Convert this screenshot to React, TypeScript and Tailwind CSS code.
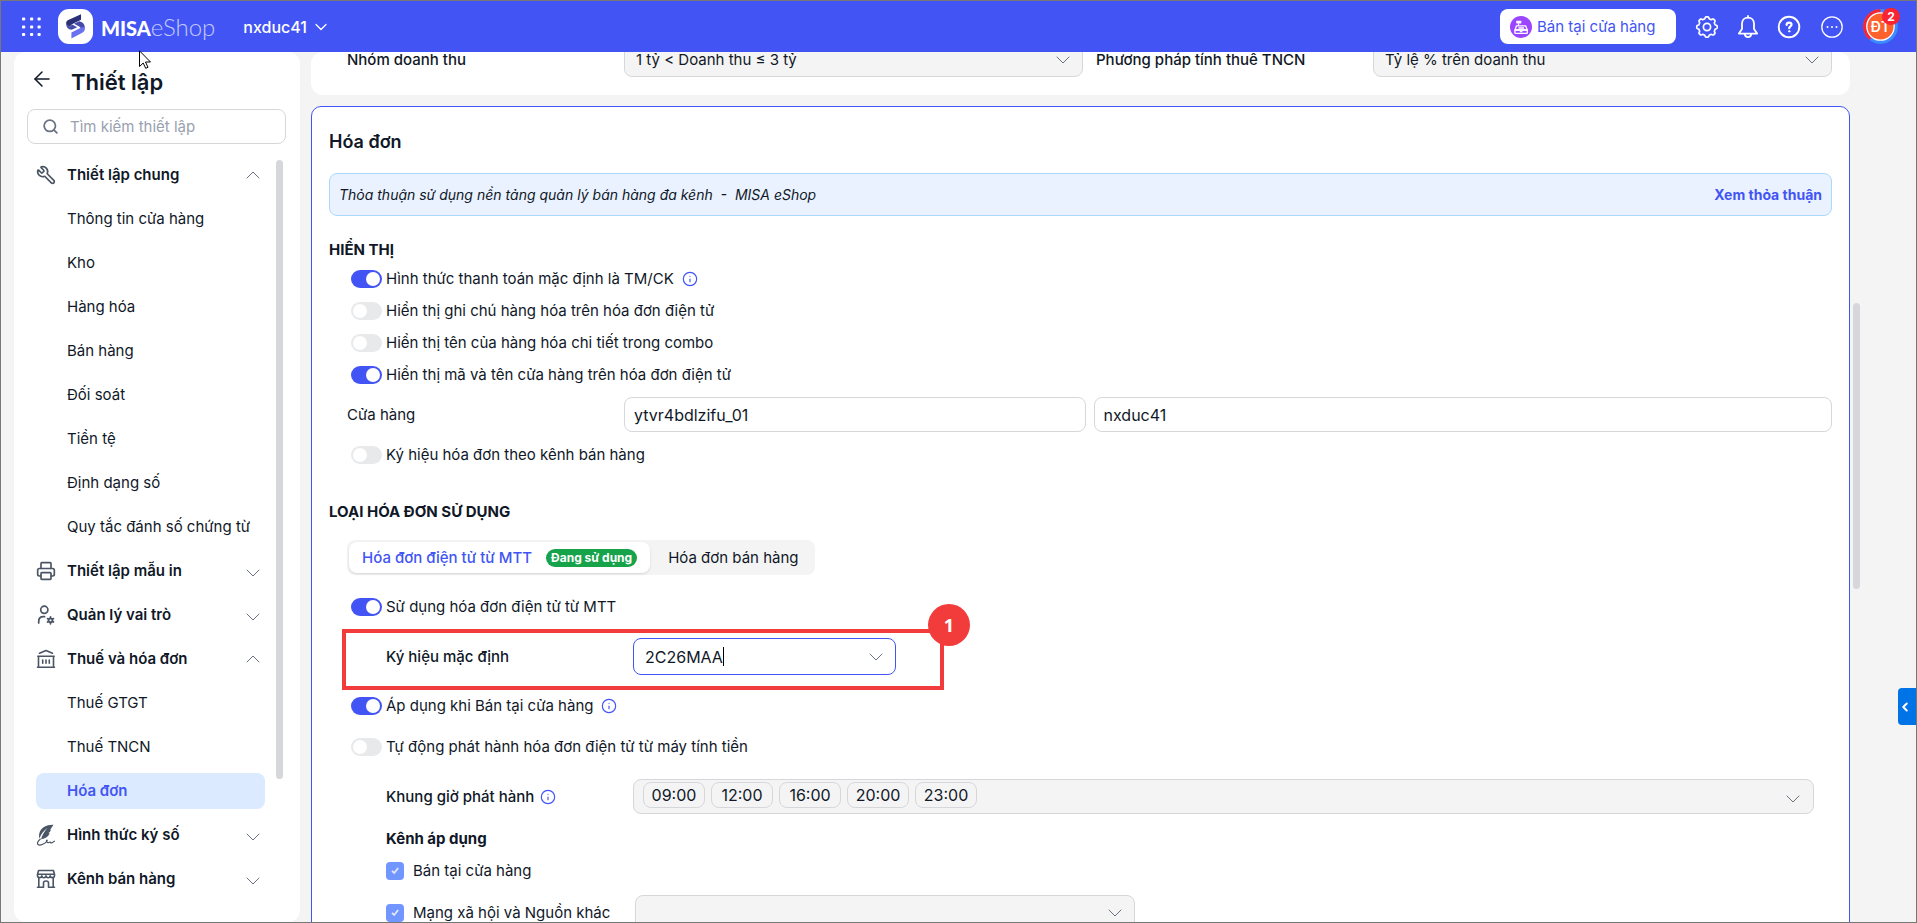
import type { ReactNode } from "react";
import { ArrowLeft, ChevronDown, ChevronLeft, ChevronUp, Info, Printer, Search, Wrench } from "lucide-react";

type NavGroup = {
  label: string;
  icon: ReactNode;
  open?: boolean;
  items?: string[];
};

/* ---------- Icons ---------- */

// 8-tooth gear outline, built from a radius that swings between tooth and gap
const gearPath =
  Array.from({ length: 160 }, (_, i) => {
    const a = (i / 160) * Math.PI * 2;
    const r = 9.3 + 0.95 * Math.tanh(2.2 * Math.cos(8 * a));
    return `${i === 0 ? "M" : "L"}${(12 + r * Math.sin(a)).toFixed(2)} ${(12 - r * Math.cos(a)).toFixed(2)}`;
  }).join("") + "Z";

function GearIcon() {
  return (
    <svg viewBox="0 0 24 24" className="w-6 h-6" fill="none" stroke="currentColor" strokeWidth="1.7">
      <path d={gearPath} strokeLinejoin="round" />
      <circle cx="12" cy="12" r="3.6" />
    </svg>
  );
}

function BellIcon() {
  return (
    <svg viewBox="0 0 24 24" className="w-6 h-6" fill="none" stroke="currentColor" strokeWidth="1.8" strokeLinejoin="round">
      <path d="M12 2.6c-3.6 0-6 2.7-6 6.2v5.2L2.9 18.6h18.2L18 14V8.8c0-3.5-2.4-6.2-6-6.2Z" />
      <path d="M8.7 18.8c.2 2 1.5 3.3 3.3 3.3s3.1-1.3 3.3-3.3" />
      <path d="M12 1v1.6" strokeLinecap="round" />
    </svg>
  );
}

function HelpIcon() {
  return (
    <svg viewBox="0 0 24 24" className="w-6 h-6" fill="none" stroke="currentColor" strokeLinecap="round" strokeLinejoin="round">
      <circle cx="12" cy="12" r="10.3" strokeWidth="1.9" />
      <path d="M9.6 9.8c.1-1.3 1.1-2.1 2.5-2.1s2.4.8 2.4 2c0 1.7-2.3 1.7-2.3 3.5" strokeWidth="2.2" />
      <circle cx="12.2" cy="16.3" r=".7" fill="currentColor" strokeWidth="1" />
    </svg>
  );
}

function MoreIcon() {
  return (
    <svg viewBox="0 0 24 24" className="w-6 h-6" fill="none" stroke="currentColor">
      <circle cx="12" cy="12" r="10.2" strokeWidth="1.3" />
      <g fill="currentColor" stroke="none">
        <circle cx="7.5" cy="12" r="1" />
        <circle cx="12" cy="12" r="1" />
        <circle cx="16.5" cy="12" r="1" />
      </g>
    </svg>
  );
}

function AppsIcon() {
  return (
    <svg viewBox="0 0 20 20" className="w-5 h-5" fill="currentColor">
      {[0, 8, 15.5].map((y) =>
        [0, 8, 15.5].map((x) => <rect key={`${x}-${y}`} x={x} y={y + 0.5} width="3.2" height="3" rx="1" />)
      )}
    </svg>
  );
}

function LogoMark() {
  return (
    <svg viewBox="0 0 35 35" className="w-[35px] h-[35px] rounded-[11px] bg-white">
      <path d="M23 5.2v5.6l-9 4.4-2.5 2.6L8.3 15.2c-.6-2 .2-3.600 2-4.300Z" fill="#2b2f78" />
      <path d="M8 14.800l3.600 3 2.600-2.300 5 2.800-5.500 2.500c-3.700-.3-5.500-2.500-5.700-6Z" fill="#4549a8" />
      <path d="M16 14.800l5.200-2.600c3.500.7 5.400 2.700 5.600 5.700l-2 2.800-3.600-3.200Z" fill="#4549a8" />
      <path d="M27 17.500c.3 3.500-.8 5.400-3.200 6.600L13.400 29.600v-6.100l9-4.400Z" fill="#6a72ef" />
    </svg>
  );
}

function RegisterIcon() {
  return (
    <svg viewBox="0 0 22 22" className="w-[22px] h-[22px]" fill="none" stroke="white" strokeWidth="1.3" strokeLinejoin="round">
      <circle cx="11" cy="11" r="11" fill="#9a45ff" stroke="none" />
      <path d="M6.5 9.8h9.2l1.5 4.2H5Z" />
      <rect x="4.9" y="14" width="12.4" height="3.3" rx=".6" />
      <path d="M8.500 9.500V7.500M8.500 12h5.500M9.800 15.700h2.600" />
      <rect x="6.3" y="4.8" width="5" height="2.6" rx=".4" fill="white" stroke="none" />
    </svg>
  );
}

function UserCogIcon() {
  return (
    <svg viewBox="0 0 20 20" className="w-5 h-5" fill="none" stroke="currentColor" strokeWidth="1.7" strokeLinecap="round">
      <circle cx="8.3" cy="4.8" r="3.6" />
      <path d="M2.700 18v-1.600c0-2.800 1.800-4.700 4.700-4.700h1.200" />
      <circle cx="14.5" cy="15.3" r="2" />
      <path d="M14.500 11.800v1.500M14.500 17.300v1.500M11.500 13.600l1.300.7M16.200 16.300l1.300.7M11.500 17l1.300-.7M16.200 14.300l1.300-.7" />
    </svg>
  );
}

function BankIcon() {
  return (
    <svg viewBox="0 0 20 20" className="w-5 h-5" fill="none" stroke="currentColor" strokeWidth="1.6" strokeLinecap="round" strokeLinejoin="round">
      <path d="M3.500 4.200 10 1.500l6.500 2.700M1.800 7.200h16.400M1.500 18.300h17M2.500 7.200v11M17.500 7.200v11" />
      <path d="M6.700 11v3.200M10 11v3.200M13.300 11v3.200" />
    </svg>
  );
}

function QuillIcon() {
  return (
    <svg viewBox="0 0 20 22" className="w-5 h-[22px]" fill="none" stroke="currentColor" strokeLinecap="round">
      <path d="M17.500.8C10.500.6 4.500 4 3.300 9.500c-.4 1.700-.3 3.400.1 4.900C5.400 9.500 8 6.500 11.500 4 8.500 7.200 6.200 11 5 15.300c4.500-.4 7.600-2.500 8.700-6.200l-1.500.2c1.500-.9 2.300-1.900 2.700-3.500l-.9.1c1.300-1.300 2.100-3.100 3.500-5.100Z" fill="currentColor" stroke="none" />
      <path d="M4.200 15.200C2 16.800.8 19 2 20.500c2 1.700 7.500-1.200 9-3.500.8-1.300-.7-1.200-.5.2.3 1.700 2 1.900 3.200.9.7-.7.6 1.200 2 .8 1-.2 1.600-1 2.600-1.700" strokeWidth="1.2" />
    </svg>
  );
}

function StoreIcon() {
  return (
    <svg viewBox="0 0 20 20" className="w-5 h-5" fill="none" stroke="currentColor" strokeWidth="1.6" strokeLinecap="round" strokeLinejoin="round">
      <path d="M2.600 1.500h14.800l1.100 3.800v1.200c0 2.800-4 2.800-4.300.3-.3 2.500-4 2.500-4.200 0-.2 2.500-3.900 2.500-4.200 0-.3 2.500-4.300 2.500-4.300-.3V5.300ZM1.600 5.200h16.800" />
      <path d="M2.800 9v9.300M17.200 9v9.300M1.500 18.300h6v-4.500c0-1.100 1-1.800 2.500-1.800s2.500.7 2.500 1.800v4.500h6" />
    </svg>
  );
}

/* ---------- Data ---------- */

const navGroups: NavGroup[] = [
  {
    label: "Thiết lập chung",
    icon: <Wrench className="w-5 h-5 -scale-x-100" strokeWidth={2} />,
    open: true,
    items: [
      "Thông tin cửa hàng",
      "Kho",
      "Hàng hóa",
      "Bán hàng",
      "Đối soát",
      "Tiền tệ",
      "Định dạng số",
      "Quy tắc đánh số chứng từ",
    ],
  },
  { label: "Thiết lập mẫu in", icon: <Printer className="w-5 h-5" strokeWidth={2} /> },
  { label: "Quản lý vai trò", icon: <UserCogIcon /> },
  {
    label: "Thuế và hóa đơn",
    icon: <BankIcon />,
    open: true,
    items: ["Thuế GTGT", "Thuế TNCN", "Hóa đơn"],
  },
  { label: "Hình thức ký số", icon: <QuillIcon /> },
  { label: "Kênh bán hàng", icon: <StoreIcon /> },
];

const displayOptions = [
  { id: "default-payment", label: "Hình thức thanh toán mặc định là TM/CK", on: true, info: true },
  { id: "item-note", label: "Hiển thị ghi chú hàng hóa trên hóa đơn điện tử", on: false },
  { id: "combo-names", label: "Hiển thị tên của hàng hóa chi tiết trong combo", on: false },
  { id: "store-code", label: "Hiển thị mã và tên cửa hàng trên hóa đơn điện tử", on: true },
];

const timeSlots = ["09:00", "12:00", "16:00", "20:00", "23:00"];

/* ---------- Shared controls ---------- */

function InfoMark() {
  return <Info className="w-4 h-4 text-[#4255f4]" strokeWidth={1.75} />;
}

function Toggle({ id, label, on, info }: { id: string; label: string; on?: boolean; info?: boolean }) {
  return (
    <div className="flex items-center h-8 ml-[22px]">
      <input
        id={id}
        type="checkbox"
        role="switch"
        defaultChecked={on}
        className="appearance-none shrink-0 w-[31px] h-[18px] p-0.5 rounded-full bg-[#e8e9eb] checked:bg-[#4255f4] before:block before:w-3.5 before:h-3.5 before:rounded-full before:bg-white checked:before:translate-x-[13px]"
      />
      <label htmlFor={id} className="ml-1">
        {label}
      </label>
      {info && (
        <span className="ml-2">
          <InfoMark />
        </span>
      )}
    </div>
  );
}

function SelectBox({ id, value, label, className = "" }: { id: string; value: string; label?: string; className?: string }) {
  return (
    <div className={`relative ${className}`}>
      <select
        id={id}
        aria-label={label}
        defaultValue={value}
        className="appearance-none w-full h-[35px] pl-[11px] pr-10 rounded-lg border border-[#d5d7db] bg-[#f4f4f4]"
      >
        <option value={value}>{value}</option>
      </select>
      <ChevronDown className="absolute right-2 top-1.5 w-6 h-6 text-gray-500 pointer-events-none" strokeWidth={1} />
    </div>
  );
}

function ChannelCheck({ id, label }: { id: string; label: string }) {
  return (
    <div className="flex items-center h-8">
      <span className="relative flex">
        <input id={id} type="checkbox" defaultChecked className="appearance-none w-[18px] h-[18px] rounded bg-[#7296ff]" />
        <svg viewBox="0 0 18 18" className="absolute inset-0 pointer-events-none" fill="none" stroke="#e3e8f5" strokeWidth="1.8">
          <path d="M6 8.8 8.2 11 12.2 6" />
        </svg>
      </span>
      <label htmlFor={id} className="ml-[9px]">
        {label}
      </label>
    </div>
  );
}

/* ---------- Page sections ---------- */

function Header() {
  return (
    <header className="flex items-center shrink-0 h-[51px] pl-[21px] pr-[18px] bg-[#4255f4] text-white">
      <button type="button" aria-label="Ứng dụng">
        <AppsIcon />
      </button>
      <a href="#home" className="flex items-center ml-4">
        <LogoMark />
        <span className="ml-2 flex items-baseline font-[Lato,sans-serif] leading-8">
          <span className="text-xl font-black">MISA</span>
          <span className="text-2xl font-light text-white/70">eShop</span>
        </span>
      </a>
      <button type="button" className="flex items-center gap-1 ml-7 text-base font-medium">
        nxduc41
        <ChevronDown className="w-5 h-5" strokeWidth={1.5} />
      </button>

      <div className="flex items-center ml-auto">
        <button type="button" className="flex items-center gap-[5px] w-44 h-[35px] pl-2.5 rounded-lg bg-white text-[#4255f4] whitespace-nowrap">
          <RegisterIcon />
          Bán tại cửa hàng
        </button>
        <button type="button" aria-label="Cài đặt" className="ml-[19px]">
          <GearIcon />
        </button>
        <button type="button" aria-label="Thông báo" className="ml-[17px]">
          <BellIcon />
        </button>
        <button type="button" aria-label="Trợ giúp" className="ml-[17px]">
          <HelpIcon />
        </button>
        <button type="button" aria-label="Khác" className="ml-[19px]">
          <MoreIcon />
        </button>
        <button type="button" className="relative flex items-center justify-center ml-[19px] w-[35px] h-[35px]">
          <svg viewBox="0 0 35 35" className="absolute inset-0" fill="none">
            <circle cx="17.5" cy="17.5" r="15.8" stroke="#3b8cff" strokeWidth="3.2" />
            <path d="M17.5 1.7a15.8 15.8 0 0 0-10 28.1" stroke="#f92332" strokeWidth="3.2" />
            <circle cx="17.5" cy="17.5" r="13.7" fill="#fd622d" stroke="white" strokeWidth="1.3" />
          </svg>
          <span className="relative text-sm font-semibold">ĐT</span>
          <span className="absolute -top-px -right-0.5 flex items-center justify-center w-[18px] h-[17px] rounded-full bg-[#f92332] text-xs font-bold">
            2
          </span>
        </button>
      </div>
    </header>
  );
}

function Sidebar() {
  return (
    <aside className="flex flex-col shrink-0 w-[286px] ml-[13px] rounded-xl bg-white overflow-hidden">
      <div className="flex items-center mt-3 ml-4 h-9">
        <button type="button" aria-label="Quay lại" className="mb-1.5">
          <ArrowLeft className="w-6 h-6" strokeWidth={1.5} />
        </button>
        <h1 className="ml-[17px] text-[22px] leading-9 font-semibold">Thiết lập</h1>
      </div>
      <div className="flex items-center gap-[11px] mt-[9px] ml-[13px] mr-3.5 h-[35px] pl-3.5 rounded-lg border border-[#d5d7db]">
        <Search className="w-[17px] h-[17px] text-gray-500" strokeWidth={2.5} />
        <input
          type="search"
          aria-label="Tìm kiếm thiết lập"
          placeholder="Tìm kiếm thiết lập"
          className="flex-1 min-w-0 outline-none placeholder:text-gray-400"
        />
      </div>
      <div className="flex mt-[13px]">
        <nav className="flex flex-col gap-2 flex-1 pl-[22px]">
          {navGroups.map((group) => (
            <div key={group.label} className="flex flex-col gap-2">
              <button type="button" className="flex items-center h-9 font-semibold text-left">
                <span className="flex justify-center w-5 text-gray-600">{group.icon}</span>
                <span className="ml-[11px]">{group.label}</span>
                {group.open ? (
                  <ChevronUp className="ml-auto w-6 h-6 text-gray-500" strokeWidth={1} />
                ) : (
                  <ChevronDown className="ml-auto mt-1 w-6 h-6 text-gray-500" strokeWidth={1} />
                )}
              </button>
              {group.items?.map((item) => (
                <a
                  key={item}
                  href="#"
                  className={
                    item === "Hóa đơn"
                      ? "flex items-center h-9 pl-[31px] rounded-lg bg-[#dbeafe] text-[#4255f4] font-semibold"
                      : "flex items-center h-9 pl-[31px] rounded-lg"
                  }
                >
                  {item}
                </a>
              ))}
            </div>
          ))}
        </nav>
        <div className="ml-[11px] mr-[17px] mt-[3px] w-[7px] h-[619px] rounded-full bg-[#d5d7db]" />
      </div>
    </aside>
  );
}

function RevenueCard() {
  return (
    <section className="grid grid-cols-2 gap-[13px] pt-4 pb-[18px] pl-9 pr-[18px] rounded-xl bg-white">
      <div className="flex items-center">
        <label htmlFor="revenue-group" className="w-[277px] font-medium">
          Nhóm doanh thu
        </label>
        <SelectBox id="revenue-group" value="1 tỷ < Doanh thu ≤ 3 tỷ" className="flex-1" />
      </div>
      <div className="flex items-center">
        <label htmlFor="tax-method" className="w-[277px] font-medium">
          Phương pháp tính thuế TNCN
        </label>
        <SelectBox id="tax-method" value="Tỷ lệ % trên doanh thu" className="flex-1" />
      </div>
    </section>
  );
}

function InvoiceCard() {
  return (
    <section className="mt-[11px] px-[17px] pt-[23px] pb-6 rounded-[10px] border border-[#4255f4] bg-white">
      <h2 className="text-lg leading-6 font-semibold">Hóa đơn</h2>

      {/* Agreement banner */}
      <div className="flex items-center justify-between mt-[19px] h-[43px] px-[9px] rounded-lg border border-[#a9d8fc] bg-[#eaf2ff] text-sm">
        <em className="whitespace-pre">Thỏa thuận sử dụng nền tảng quản lý bán hàng đa kênh  -  MISA eShop</em>
        <a href="#agreement" className="font-bold text-[#4255f4]">
          Xem thỏa thuận
        </a>
      </div>

      {/* Display options */}
      <h3 className="mt-[22px] leading-6 font-bold">HIỂN THỊ</h3>
      <div className="mt-px">
        {displayOptions.map((opt) => (
          <Toggle key={opt.id} {...opt} />
        ))}
      </div>
      <div className="flex items-center mt-1.5 ml-[18px]">
        <label htmlFor="store-id" className="w-[277px]">
          Cửa hàng
        </label>
        <div className="grid grid-cols-[5fr_8fr] gap-2 flex-1">
          <input id="store-id" type="text" defaultValue="ytvr4bdlzifu_01" className="min-w-0 h-[35px] px-[9px] rounded-lg border border-[#d5d7db] text-base" />
          <input type="text" aria-label="Tên cửa hàng" defaultValue="nxduc41" className="min-w-0 h-[35px] px-[9px] rounded-lg border border-[#d5d7db] text-base" />
        </div>
      </div>
      <div className="mt-[7px]">
        <Toggle id="symbol-by-channel" label="Ký hiệu hóa đơn theo kênh bán hàng" />
      </div>

      {/* Invoice types */}
      <h3 className="mt-[29px] leading-6 font-bold">LOẠI HÓA ĐƠN SỬ DỤNG</h3>
      <div role="tablist" className="flex w-fit mt-4 ml-[18px] h-[35px] p-0.5 rounded-lg bg-[#f4f4f4]">
        <button type="button" role="tab" aria-selected="true" className="flex items-center gap-3.5 px-[13px] rounded-lg bg-white font-medium text-[#4255f4] shadow-sm">
          Hóa đơn điện tử từ MTT
          <span className="flex items-center h-[18px] px-[5px] rounded-full bg-[#16a34a] text-xs font-bold text-white">Đang sử dụng</span>
        </button>
        <button type="button" role="tab" aria-selected="false" className="pl-[18px] pr-3.5">
          Hóa đơn bán hàng
        </button>
      </div>
      <div className="mt-4">
        <Toggle id="use-mtt" label="Sử dụng hóa đơn điện tử từ MTT" on />
      </div>

      {/* Highlighted step */}
      <div className="relative flex items-center w-[602px] mt-1.5 ml-[13px] pt-[5px] pb-[11px] pl-10 border-4 border-[#f23b3b]">
        <label htmlFor="default-symbol" className="w-[247px] font-medium">
          Ký hiệu mặc định
        </label>
        <div className="flex items-center w-[263px] h-[37px] pl-[11px] pr-[7px] rounded-lg border border-[#4255f4]">
          <input id="default-symbol" type="text" role="combobox" aria-expanded="false" defaultValue="2C26MAA" className="field-sizing-content text-base outline-none" />
          <span className="w-px h-[19px] bg-black" />
          <ChevronDown className="ml-auto w-6 h-6 text-gray-500" strokeWidth={1} />
        </div>
        <span className="absolute -top-[29px] -right-[30px] flex items-center justify-center w-[42px] h-[42px] rounded-full bg-[#f23b3b] font-['Open_Sans',sans-serif] text-lg font-bold text-white">
          1
        </span>
      </div>

      <Toggle id="apply-store" label="Áp dụng khi Bán tại cửa hàng" on info />
      <div className="mt-[9px]">
        <Toggle id="auto-publish" label="Tự động phát hành hóa đơn điện tử từ máy tính tiền" />
      </div>

      <div className="ml-[57px]">
        <div className="flex items-center mt-4 mr-[18px]">
          <div className="flex items-center gap-1.5 w-[247px]">
            <label htmlFor="publish-slots" className="font-medium">
              Khung giờ phát hành
            </label>
            <InfoMark />
          </div>
          <button id="publish-slots" type="button" className="flex items-center flex-1 gap-1.5 h-[35px] pl-[9px] pr-2 rounded-lg border border-[#d5d7db] bg-[#f4f4f4]">
            {timeSlots.map((slot) => (
              <span key={slot} className="flex items-center justify-center w-[62px] h-[26px] mb-1 rounded-lg border border-[#d5d7db] text-base">
                {slot}
              </span>
            ))}
            <ChevronDown className="ml-auto mt-1 w-6 h-6 text-gray-500" strokeWidth={1} />
          </button>
        </div>

        <h4 className="mt-[13px] leading-6 font-bold">Kênh áp dụng</h4>
        <div className="mt-1">
          <ChannelCheck id="channel-store" label="Bán tại cửa hàng" />
        </div>
        <div className="flex items-center mt-2">
          <div className="w-[249px]">
            <ChannelCheck id="channel-social" label="Mạng xã hội và Nguồn khác" />
          </div>
          <SelectBox id="social-sources" value="" label="Nguồn khác" className="w-[500px]" />
        </div>
      </div>
    </section>
  );
}

export default function App() {
  return (
    <div className="relative flex flex-col h-screen overflow-hidden border border-[#777777] bg-[#f4f4f4] font-[Inter,sans-serif] text-[15px] leading-5 text-gray-900">
      <Header />
      <div className="flex flex-1 min-h-0">
        <Sidebar />
        <main className="flex-1 min-w-0 ml-[11px] rounded-t-xl overflow-hidden">
          {/* Content is scrolled part way under the header */}
          <div className="-mt-[26px]">
            <RevenueCard />
            <InvoiceCard />
          </div>
        </main>
        <div className="shrink-0 w-[66px] pl-[3px]">
          <div className="mt-[251px] w-[7px] h-[286px] rounded-full bg-[#d5d7db]" />
        </div>
      </div>

      {/* Collapsed side panel handle */}
      <button type="button" aria-label="Mở bảng bên" className="absolute right-0 top-[687px] flex items-center w-[18px] h-[37px] rounded-l bg-[#0073e6] text-white">
        <ChevronLeft className="w-3.5 h-3.5" strokeWidth={3.5} />
      </button>

      {/* Mouse pointer */}
      <svg viewBox="0 0 12 19" className="absolute left-[138px] top-[49px] w-3 h-[19px]" fill="white" stroke="black" strokeWidth="1">
        <path d="M.5.8v15.7l3.7-3.5 2.5 5.3 2.3-1-2.5-5.3h5Z" />
      </svg>
    </div>
  );
}
